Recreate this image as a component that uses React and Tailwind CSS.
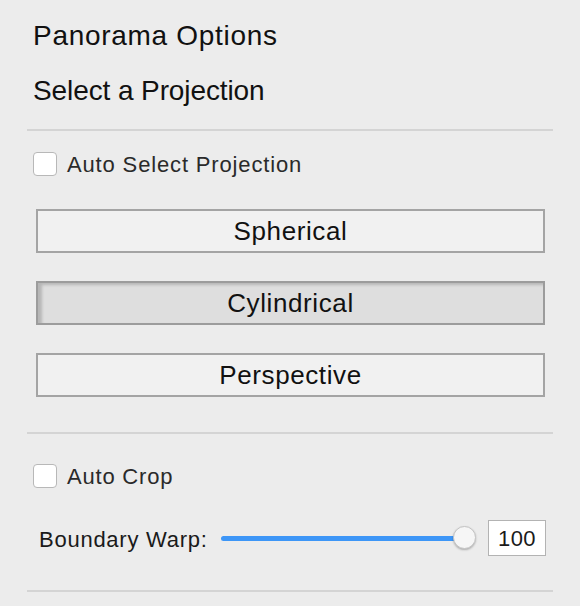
import React from "react";

function Divider({ className = "" }) {
  return <div className={"h-[2px] bg-[#d4d4d4] " + className} />;
}

function Checkbox({ label, className = "", spacing = "tracking-[0.7px]" }) {
  return (
    <div className={"flex items-center h-[24px] pl-[6px] " + className}>
      <div className="w-[24px] h-[24px] rounded-[4px] border border-[#b8b8b8] bg-white" />
      <span className={"ml-[10px] pt-[2px] text-[22px] leading-[22px] text-[#2a2a2a] " + spacing}>{label}</span>
    </div>
  );
}

function ProjButton({ label, selected, className = "" }) {
  return (
    <div
      className={
        "ml-[9px] w-[509px] h-[44px] flex items-center justify-center border-2 pt-[1px] text-[26px] tracking-[0.6px] text-[#111] " +
        (selected
          ? "bg-[#dedede] border-[#9c9c9c] shadow-[inset_4px_2px_3px_rgba(0,0,0,0.18)] "
          : "bg-[#f1f1f1] border-[#a4a4a4] ") +
        className
      }
    >
      {label}
    </div>
  );
}

export default function App() {
  return (
    <div
      className="w-[580px] h-[606px] bg-[#ececec] overflow-hidden"
      style={{ fontFamily: '"Liberation Sans", Arial, sans-serif' }}
    >
      <div className="ml-[27px] w-[526px] pt-[22px]">
        <div className="pl-[6px] text-[28px] leading-[28px] tracking-[0.7px] text-[#111]">Panorama Options</div>
        <div className="pl-[6px] mt-[27px] text-[28px] leading-[28px] tracking-[-0.1px] text-[#111]">Select a Projection</div>
        <Divider className="mt-[24px]" />
        <Checkbox label="Auto Select Projection" className="mt-[21px]" spacing="tracking-[0.85px]" />
        <ProjButton label="Spherical" className="mt-[33px]" />
        <ProjButton label="Cylindrical" selected className="mt-[28px]" />
        <ProjButton label="Perspective" className="mt-[28px]" />
        <Divider className="mt-[35px]" />
        <Checkbox label="Auto Crop" className="mt-[30px]" spacing="tracking-[0.8px]" />
        <div className="mt-[32px] h-[36px] flex items-center pl-[12px]">
          <span className="pt-[2px] text-[22px] tracking-[0.75px] text-[#1a1a1a] w-[182px]">Boundary Warp:</span>
          <div className="relative w-[254px] h-[24px] flex items-center">
            <div className="w-[243px] h-[5px] rounded-full bg-[#3d96f7]" />
            <div className="absolute left-[232px] top-0 w-[23px] h-[23px] rounded-full bg-[#f6f6f6] border border-[#c4c4c4] shadow-[0_1px_2px_rgba(0,0,0,0.25)]" />
          </div>
          <div className="ml-[13px] w-[58px] h-[36px] bg-white border border-[#b3b3b3] flex items-center justify-center pt-[1px] text-[22px] tracking-[0.5px] text-[#1a1a1a]">
            100
          </div>
        </div>
        <Divider className="mt-[34px]" />
      </div>
    </div>
  );
}
